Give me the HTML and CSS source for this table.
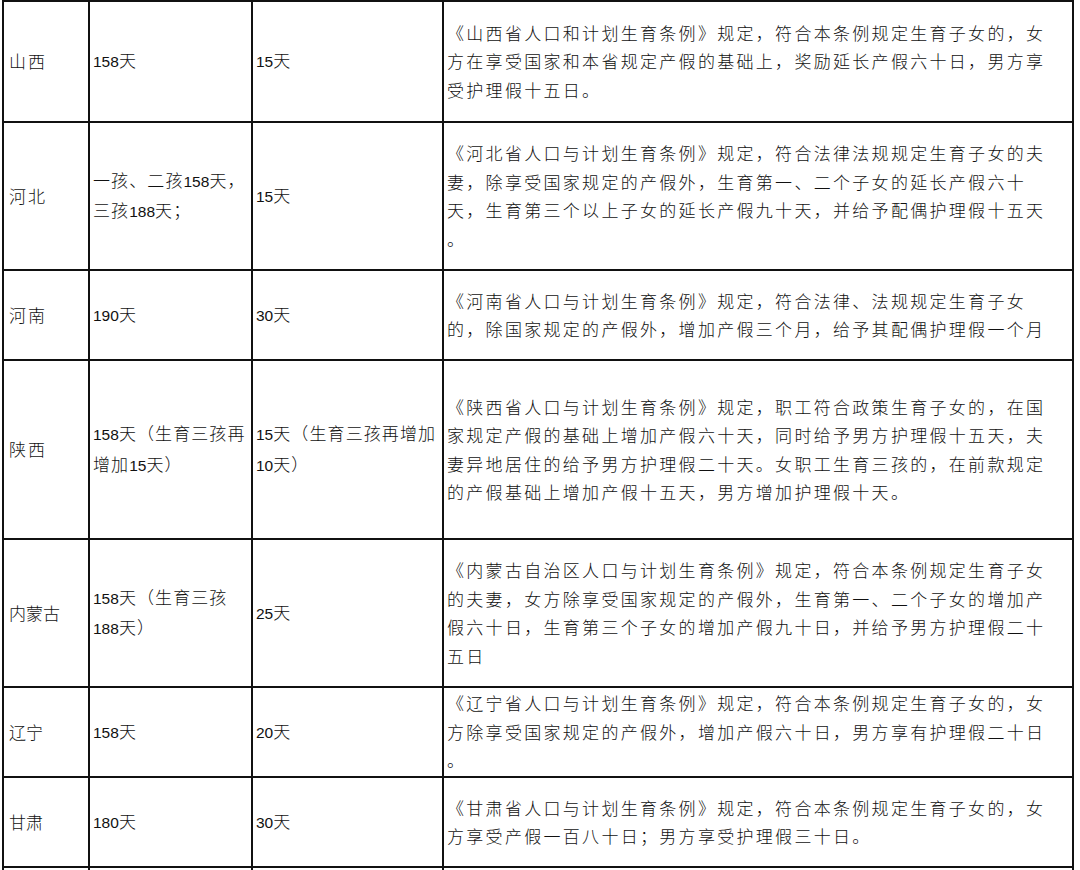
FILE: index.html
```html
<!DOCTYPE html>
<html lang="zh-CN">
<head>
<meta charset="utf-8">
<title>各省产假与护理假</title>
<link rel="stylesheet" href="styles.css">
</head>
<body>
<table class="leave">
  <colgroup>
    <col class="c-prov">
    <col class="c-mat">
    <col class="c-pat">
    <col class="c-rule">
  </colgroup>
  <tbody>
    <tr class="r1">
      <td class="prov">山西</td>
      <td><span class="n">158</span>天</td>
      <td><span class="n">15</span>天</td>
      <td class="rule">《山西省人口和计划生育条例》规定，符合本条例规定生育子女的，女<br>方在享受国家和本省规定产假的基础上，奖励延长产假六十日，男方享<br>受护理假十五日。</td>
    </tr>
    <tr class="r2">
      <td class="prov">河北</td>
      <td>一孩、二孩<span class="n">158</span>天，<br>三孩<span class="n">188</span>天；</td>
      <td><span class="n">15</span>天</td>
      <td class="rule">《河北省人口与计划生育条例》规定，符合法律法规规定生育子女的夫<br>妻，除享受国家规定的产假外，生育第一、二个子女的延长产假六十<br>天，生育第三个以上子女的延长产假九十天，并给予配偶护理假十五天<br>。</td>
    </tr>
    <tr class="r3">
      <td class="prov">河南</td>
      <td><span class="n">190</span>天</td>
      <td><span class="n">30</span>天</td>
      <td class="rule">《河南省人口与计划生育条例》规定，符合法律、法规规定生育子女<br>的，除国家规定的产假外，增加产假三个月，给予其配偶护理假一个月</td>
    </tr>
    <tr class="r4">
      <td class="prov">陕西</td>
      <td><span class="n">158</span>天（生育三孩再<br>增加<span class="n">15</span>天）</td>
      <td><span class="n">15</span>天（生育三孩再增加<br><span class="n">10</span>天）</td>
      <td class="rule">《陕西省人口与计划生育条例》规定，职工符合政策生育子女的，在国<br>家规定产假的基础上增加产假六十天，同时给予男方护理假十五天，夫<br>妻异地居住的给予男方护理假二十天。女职工生育三孩的，在前款规定<br>的产假基础上增加产假十五天，男方增加护理假十天。</td>
    </tr>
    <tr class="r5">
      <td class="prov tight">内蒙古</td>
      <td><span class="n">158</span>天（生育三孩<br><span class="n">188</span>天）</td>
      <td><span class="n">25</span>天</td>
      <td class="rule">《内蒙古自治区人口与计划生育条例》规定，符合本条例规定生育子女<br>的夫妻，女方除享受国家规定的产假外，生育第一、二个子女的增加产<br>假六十日，生育第三个子女的增加产假九十日，并给予男方护理假二十<br>五日</td>
    </tr>
    <tr class="r6">
      <td class="prov tight">辽宁</td>
      <td><span class="n">158</span>天</td>
      <td><span class="n">20</span>天</td>
      <td class="rule">《辽宁省人口与计划生育条例》规定，符合本条例规定生育子女的，女<br>方除享受国家规定的产假外，增加产假六十日，男方享有护理假二十日<br>。</td>
    </tr>
    <tr class="r7">
      <td class="prov tight">甘肃</td>
      <td><span class="n">180</span>天</td>
      <td><span class="n">30</span>天</td>
      <td class="rule">《甘肃省人口与计划生育条例》规定，符合本条例规定生育子女的，女<br>方享受产假一百八十日；男方享受护理假三十日。</td>
    </tr>
    <tr class="r8">
      <td class="prov">&nbsp;</td>
      <td>&nbsp;</td>
      <td>&nbsp;</td>
      <td>&nbsp;</td>
    </tr>
  </tbody>
</table>
</body>
</html>
```
FILE: styles.css
```css
html, body {
  margin: 0;
  padding: 0;
  background: #ffffff;
}

body {
  font-family: "Noto Sans CJK SC", "Noto Sans", sans-serif;
  color: #111111;
  overflow: hidden;
}

.leave {
  border-collapse: collapse;
  table-layout: fixed;
  width: 1072px;
  margin: 0 0 0 2px;
}

.c-prov { width: 86px; }
.c-mat  { width: 163px; }
.c-pat  { width: 191px; }
.c-rule { width: 630px; }

.leave td {
  border: 2px solid #111111;
  padding: 0 0 0 3px;
  vertical-align: middle;
  font-size: 17px;
  font-weight: 300;
  letter-spacing: 1.1px;
  line-height: 28.5px;
  white-space: nowrap;
  overflow: hidden;
}

.leave td.prov {
  padding-left: 5px;
  letter-spacing: 2px;
}

.leave td.tight {
  letter-spacing: 0;
}

.leave td.rule {
  letter-spacing: 2.3px;
}

.n {
  font-family: "Liberation Sans", Arial, sans-serif;
  font-size: 15.5px;
  letter-spacing: 0;
}

.r1 td { height: 119px; }
.r2 td { height: 146px; }
.r3 td { height: 88px; }
.r4 td { height: 177px; }
.r5 td { height: 146px; }
.r6 td { height: 88px; }
.r7 td { height: 88px; }
.r8 td { height: 60px; }
```
